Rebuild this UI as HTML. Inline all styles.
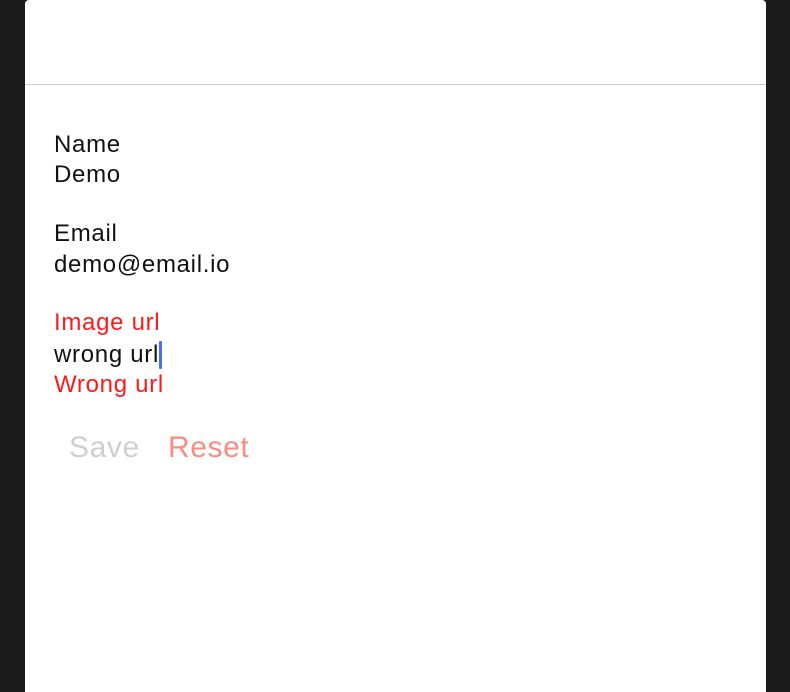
<!DOCTYPE html>
<html><head><style>
body{margin:0;width:790px;height:692px;background:#1b1b1b;overflow:hidden;font-family:"Liberation Sans",sans-serif;position:relative}
.p{position:absolute;left:25px;top:0;width:741px;height:692px;background:#fff;border-top-left-radius:4px;border-top-right-radius:4px}
.hr{position:absolute;left:25px;top:84px;width:741px;height:1px;background:#cfcfcf}
.t{position:absolute;left:54px;font-size:24px;letter-spacing:0.7px;line-height:30px;color:#111;white-space:nowrap}
.r{color:#fe1a1a}
.b{position:absolute;font-size:30px;letter-spacing:0.6px;line-height:36px;top:430px}
.c{display:inline-block;width:3px;height:28px;background:#4d6ef0;vertical-align:-7px;border-radius:1px;margin-left:0}
</style></head><body>
<div class="p"></div><div class="hr"></div>
<div class="t" style="top:130px">Name</div>
<div class="t" style="top:160px">Demo</div>
<div class="t" style="top:219px">Email</div>
<div class="t" style="top:250px">demo@email.io</div>
<div class="t r" style="top:308px">Image url</div>
<div class="t" style="top:340px">wrong url<span class="c"></span></div>
<div class="t r" style="top:370px">Wrong url</div>
<div class="b" style="left:69px;color:#cfcfcf">Save</div>
<div class="b" style="left:168px;color:#fe8b80">Reset</div>
</body></html>
